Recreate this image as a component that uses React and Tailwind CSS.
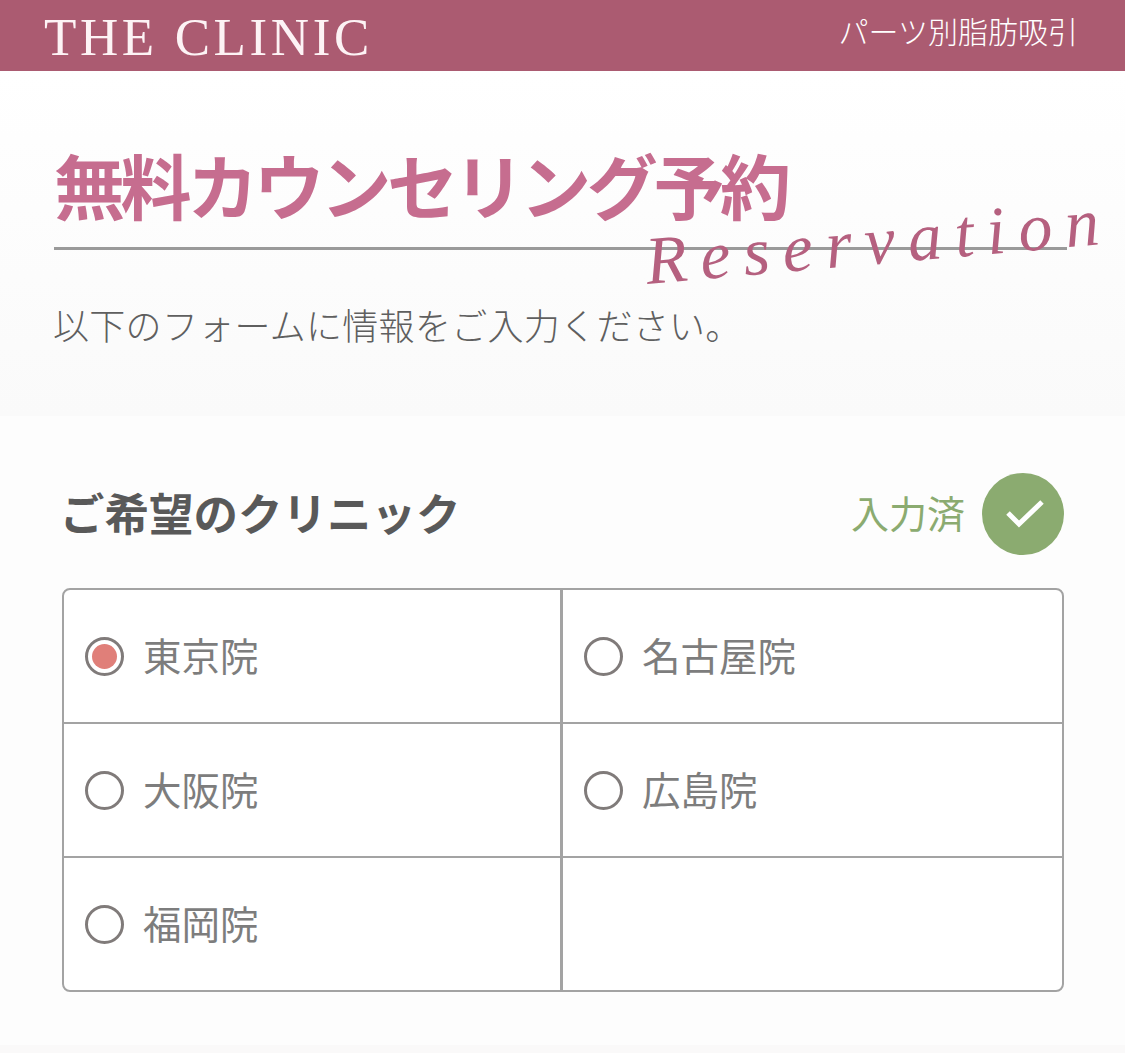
const jp = 'font-["Noto_Sans_CJK_JP","Noto_Sans",sans-serif]'

const clinics = [
  { name: '東京院', checked: true },
  { name: '名古屋院' },
  { name: '大阪院' },
  { name: '広島院' },
  { name: '福岡院' },
  { name: '' },
]

function ClinicCell({ clinic, index }) {
  const right = index % 2 === 0
  const bottom = index < 4
  return (
    <div
      className={`flex items-center gap-[19px] pl-[21px] ${bottom ? 'h-[134px] border-b-2 border-b-[#a3a3a3]' : 'h-[132px]'} ${right ? 'border-r-[3px] border-r-[#a3a3a3]' : ''}`}
    >
      {clinic.name && (
        <>
          <span className="w-[39px] h-[39px] rounded-full border-[3.5px] border-[#807b7a] flex items-center justify-center shrink-0 bg-white">
            {clinic.checked && <span className="w-[25px] h-[25px] rounded-full bg-[#e07f79]" />}
          </span>
          <span className="text-[38.5px] leading-none text-[#7d7d7d] pb-[4px]">{clinic.name}</span>
        </>
      )}
    </div>
  )
}

export default function App() {
  return (
    <div className={`w-[1125px] h-[1053px] overflow-hidden bg-[#faf9f9] ${jp}`}>
      {/* Header */}
      <header className="h-[71px] bg-[#ab5b71] flex items-start justify-between pl-[44px] pr-[47px]">
        <span className='font-["Liberation_Serif",serif] text-[53px] leading-[74px] tracking-[3.6px] text-[#fdf3f5] whitespace-nowrap'>
          THE CLINIC
        </span>
        <span className="text-[30px] leading-[60px] font-light text-white whitespace-nowrap">パーツ別脂肪吸引</span>
      </header>

      {/* Title block */}
      <section className="h-[345px] bg-gradient-to-b from-white to-[#fafafa] pt-[70px] pl-[54px]">
        <h1 className="text-[71px] leading-[84px] tracking-[-4.4px] font-bold text-[#c66d8f] whitespace-nowrap">
          無料カウンセリング予約
        </h1>
        <div className="relative mt-[22px] w-[1013px] h-[3px] bg-[#9a9a9a]">
          <span className='absolute left-[594px] top-[-14px] font-["Liberation_Serif",serif] italic text-[68px] leading-[56px] tracking-[13px] text-[#b5607f] whitespace-nowrap origin-bottom-left rotate-[-5deg]'>
            Reservation
          </span>
        </div>
        <p className="mt-[48px] -ml-[1px] text-[36px] leading-[52px] tracking-[0.3px] font-light text-[#5f5f5f] whitespace-nowrap">
          以下のフォームに情報をご入力ください。
        </p>
      </section>

      {/* Clinic select */}
      <section className="h-[629px] bg-[#fdfdfd] pl-[62px] pt-[57px]">
        <div className="w-[1002px] flex items-center justify-between">
          <h2 className="-ml-[2px] pb-[4px] text-[44.5px] leading-[78px] font-bold text-[#595959] whitespace-nowrap">ご希望のクリニック</h2>
          <div className="flex items-center gap-[17px]">
            <span className="text-[38px] leading-none text-[#8bab70] pb-[4px]">入力済</span>
            <span className="w-[82px] h-[82px] rounded-full bg-[#8bab70] block">
              <svg viewBox="0 0 82 82" className="w-[82px] h-[82px]" fill="none" stroke="white" strokeWidth="5">
                <polyline points="26,40 37,51 60,29" />
              </svg>
            </span>
          </div>
        </div>
        <div className="mt-[33px] w-[1002px] bg-white grid grid-cols-2 border-2 border-[#a3a3a3] rounded-[8px] overflow-hidden">
          {clinics.map((clinic, i) => (
            <ClinicCell key={i} clinic={clinic} index={i} />
          ))}
        </div>
      </section>
    </div>
  )
}
